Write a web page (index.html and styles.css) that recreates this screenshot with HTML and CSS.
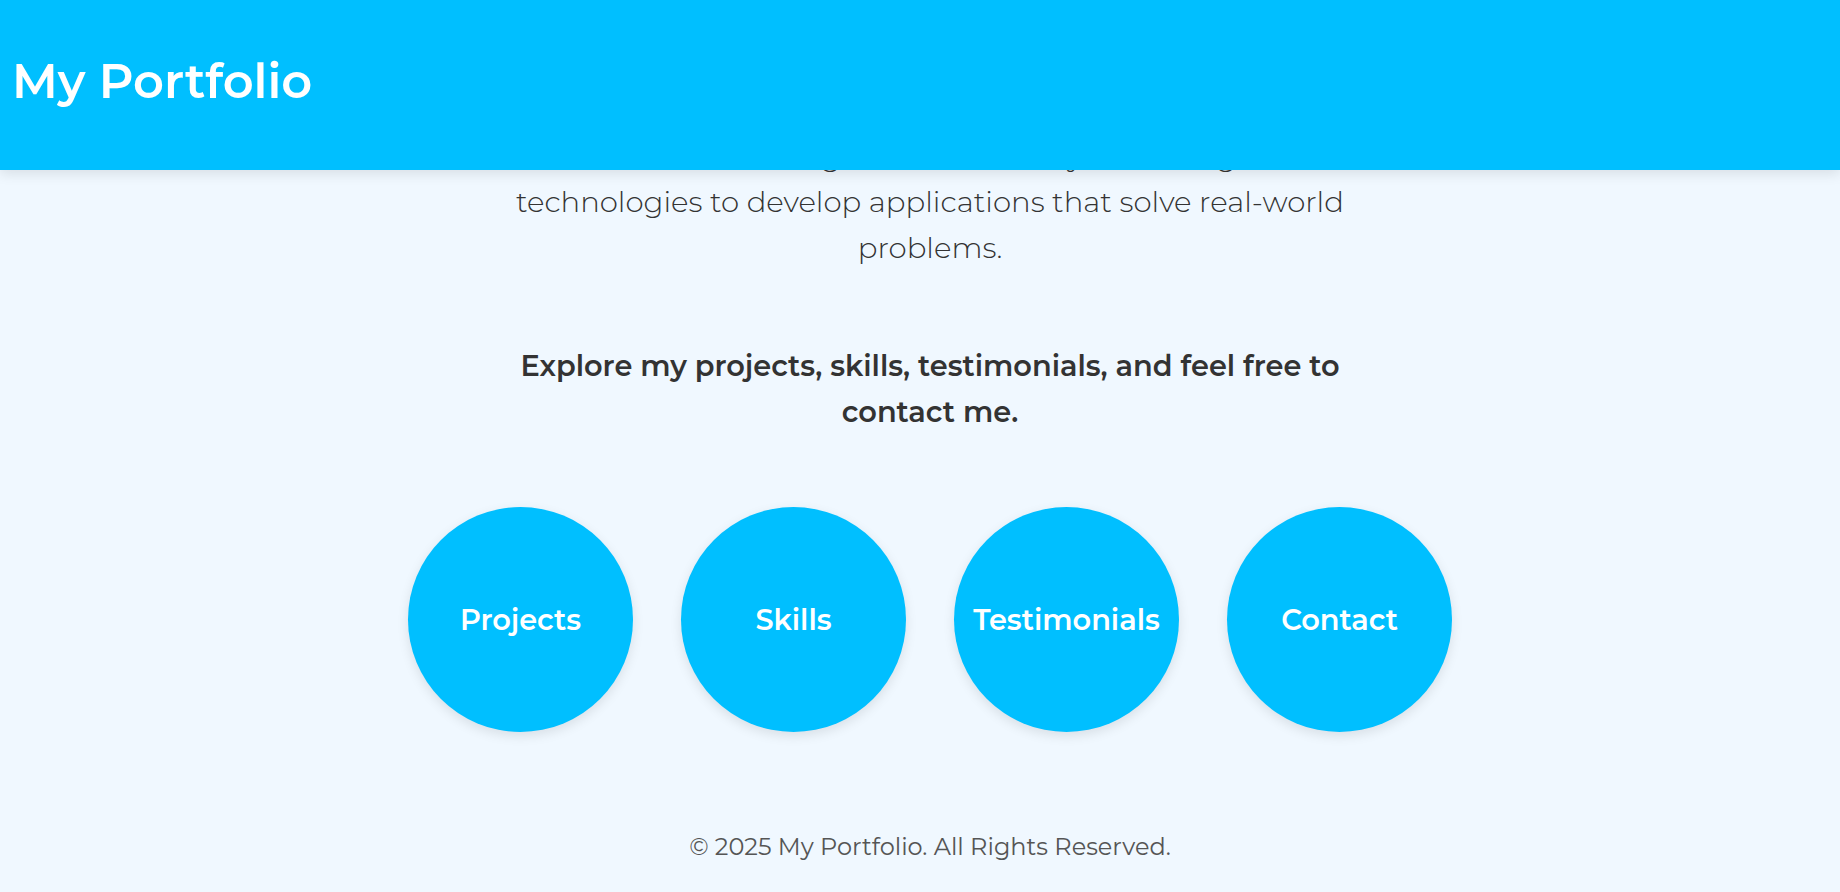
FILE: index.html
```html
<!DOCTYPE html>
<html lang="en">
<head>
<meta charset="utf-8">
<title>My Portfolio</title>
<link rel="stylesheet" href="styles.css">
</head>
<body>
<header class="site-header">
  <h1 class="site-title">My Portfolio</h1>
</header>
<main class="page">
  <section class="intro">
    <h2 class="intro-title">Welcome to My Portfolio</h2>
    <p class="intro-text">I am a frontend engineer, and I really love using new<br>technologies to develop applications that solve real-world problems.</p>
  </section>
  <section class="cta">
    <p class="cta-text">Explore my projects, skills, testimonials, and feel free to contact me.</p>
  </section>
  <nav class="circles">
    <a class="circle" href="#projects">Projects</a>
    <a class="circle" href="#skills">Skills</a>
    <a class="circle" href="#testimonials">Testimonials</a>
    <a class="circle" href="#contact">Contact</a>
  </nav>
</main>
<footer class="site-footer">
  <p class="footer-text">&copy; 2025 My Portfolio. All Rights Reserved.</p>
</footer>
</body>
</html>
```
FILE: styles.css
```css
* { box-sizing: border-box; }

body {
  margin: 0;
  background: #f0f8ff;
  color: #333;
  font-family: Montserrat, Inter, "Noto Sans", sans-serif;
}

.site-header {
  position: fixed;
  top: 0;
  left: 0;
  right: 0;
  height: 170px;
  padding: 0 12px 6px;
  display: flex;
  align-items: center;
  background: #00bfff;
  box-shadow: 0 4px 12px rgba(0, 0, 0, 0.1);
  z-index: 10;
}

.site-title {
  margin: 0;
  color: #fff;
  font-size: 48px;
  font-weight: 600;
  line-height: 1.2;
}

.page {
  padding: 70px 0 0 20px;
  display: flex;
  flex-direction: column;
  gap: 72px;
}

.intro, .cta {
  text-align: center;
}

.intro-title {
  margin: 0 0 20px;
  font-size: 36px;
  line-height: 43px;
  font-weight: 600;
}

.intro-text, .cta-text {
  max-width: 850px;
  margin: 0 auto;
  font-size: 28.8px;
  line-height: 46.08px;
}

.intro-text {
  font-size: 29.2px;
  font-weight: 300;
}

.cta-text { font-weight: 600; }

.circles {
  display: flex;
  justify-content: center;
  gap: 48px;
}

.circle {
  width: 225px;
  height: 225px;
  border-radius: 50%;
  background: #00bfff;
  color: #fff;
  display: flex;
  align-items: center;
  justify-content: center;
  font-size: 28.8px;
  font-weight: 600;
  text-decoration: none;
  box-shadow: 0 4px 12px rgba(0, 0, 0, 0.1);
}

.site-footer {
  padding: 96px 0 0 20px;
  text-align: center;
}

.footer-text {
  margin: 0;
  font-size: 24px;
  line-height: 38px;
  color: #555;
}
```
